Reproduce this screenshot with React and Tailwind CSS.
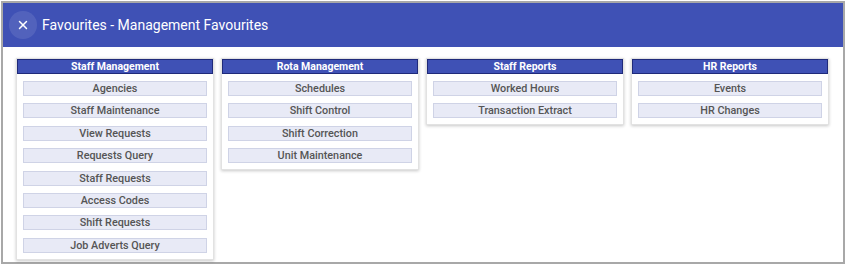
import { X } from 'lucide-react'

const GROUPS = [
  {
    title: 'Staff Management',
    items: ['Agencies', 'Staff Maintenance', 'View Requests', 'Requests Query', 'Staff Requests', 'Access Codes', 'Shift Requests', 'Job Adverts Query'],
  },
  { title: 'Rota Management', items: ['Schedules', 'Shift Control', 'Shift Correction', 'Unit Maintenance'] },
  { title: 'Staff Reports', items: ['Worked Hours', 'Transaction Extract'] },
  { title: 'HR Reports', items: ['Events', 'HR Changes'] },
]

export default function App() {
  return (
    <div className="w-[847px] h-[265px] bg-white p-[1px]" style={{ fontFamily: 'Roboto, "Liberation Sans", sans-serif' }}>
      <div className="w-[844px] h-[263px] border-2 border-[#a8a8a8] flex flex-col">
        <div className="h-[44px] bg-[#3f51b5] flex items-center pl-[6px] shrink-0">
          <button className="w-[28px] h-[28px] rounded-full bg-white/10 flex items-center justify-center text-white">
            <X size={14} strokeWidth={2.5} />
          </button>
          <h1 className="ml-[5px] text-white text-[14px] leading-none">Favourites - Management Favourites</h1>
        </div>

        <div className="flex items-start gap-[7px] pl-[13px] pt-[11px]">
          {GROUPS.map((g) => (
            <div key={g.title} className="w-[198px] border border-[#e2e2e2] bg-white shadow-[0_1px_3px_rgba(0,0,0,0.22)] pb-[6px]">
              <div className="h-[15px] bg-[#3f51b5] border border-[#1f2a7a] text-white text-[10.5px] font-bold leading-[13px] text-center">
                {g.title}
              </div>
              <div className="flex flex-col gap-[7.4px] px-[6px] pt-[7px]">
                {g.items.map((it) => (
                  <div
                    key={it}
                    className="h-[15px] bg-[#e8eaf6] border border-[#cfd3e6] text-[#555] text-[10.8px] font-medium leading-[13px] text-center"
                  >
                    {it}
                  </div>
                ))}
              </div>
            </div>
          ))}
        </div>
      </div>
    </div>
  )
}
